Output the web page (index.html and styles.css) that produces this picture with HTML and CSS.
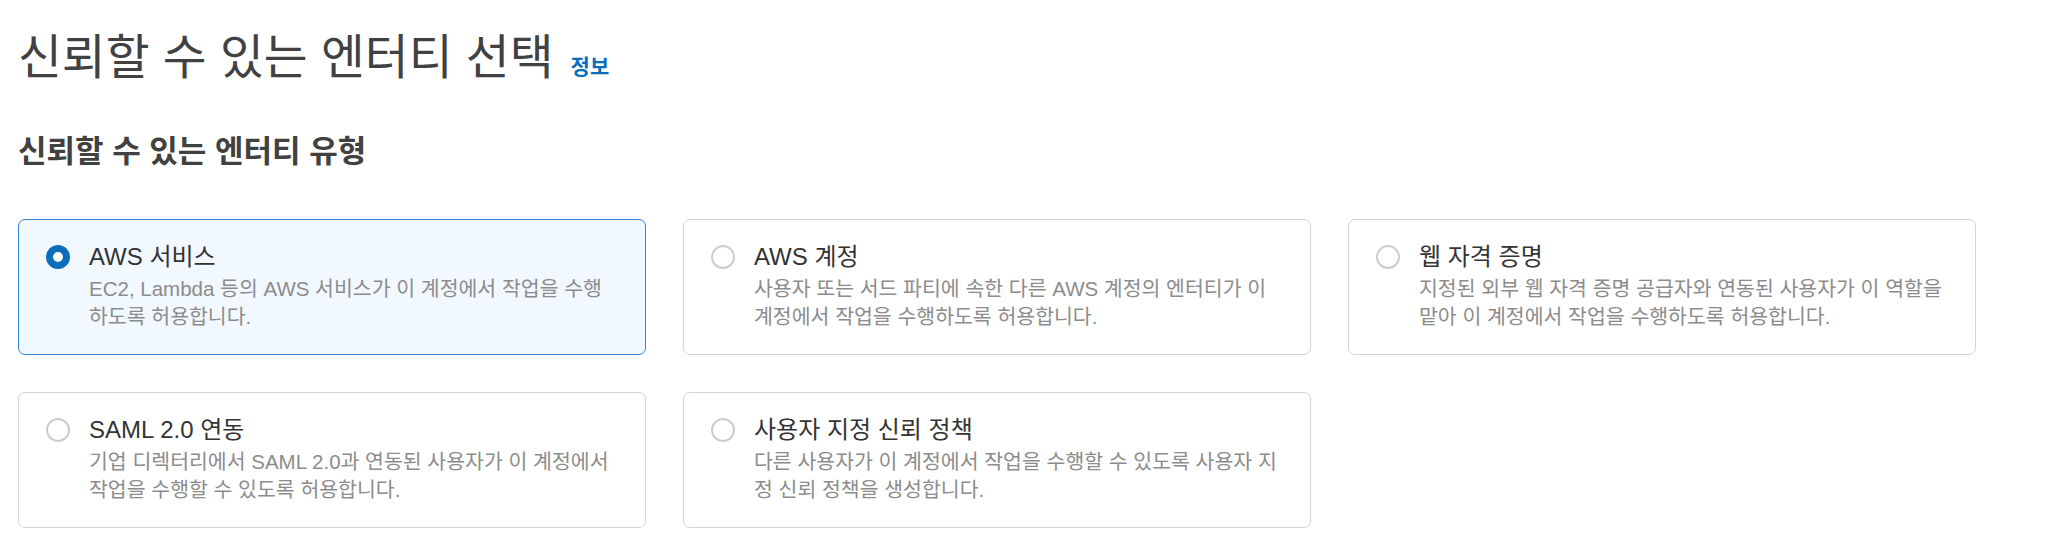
FILE: index.html
```html
<!DOCTYPE html>
<html lang="ko">
<head>
<meta charset="utf-8">
<link rel="stylesheet" href="styles.css">
</head>
<body>
<div class="page">
  <div class="header">
    <h1 class="title">신뢰할 수 있는 엔터티 선택</h1>
    <a class="info" href="#">정보</a>
  </div>
  <h2 class="subtitle">신뢰할 수 있는 엔터티 유형</h2>
  <div class="tiles">
    <div class="tile selected">
      <span class="radio checked"></span>
      <div class="tile-text">
        <div class="tile-title">AWS 서비스</div>
        <div class="tile-desc">EC2, Lambda 등의 AWS 서비스가 이 계정에서 작업을 수행하도록 허용합니다.</div>
      </div>
    </div>
    <div class="tile">
      <span class="radio"></span>
      <div class="tile-text">
        <div class="tile-title">AWS 계정</div>
        <div class="tile-desc">사용자 또는 서드 파티에 속한 다른 AWS 계정의 엔터티가 이 계정에서 작업을 수행하도록 허용합니다.</div>
      </div>
    </div>
    <div class="tile">
      <span class="radio"></span>
      <div class="tile-text">
        <div class="tile-title">웹 자격 증명</div>
        <div class="tile-desc">지정된 외부 웹 자격 증명 공급자와 연동된 사용자가 이 역할을 맡아 이 계정에서 작업을 수행하도록 허용합니다.</div>
      </div>
    </div>
    <div class="tile">
      <span class="radio"></span>
      <div class="tile-text">
        <div class="tile-title">SAML 2.0 연동</div>
        <div class="tile-desc">기업 디렉터리에서 SAML 2.0과 연동된 사용자가 이 계정에서 작업을 수행할 수 있도록 허용합니다.</div>
      </div>
    </div>
    <div class="tile">
      <span class="radio"></span>
      <div class="tile-text">
        <div class="tile-title">사용자 지정 신뢰 정책</div>
        <div class="tile-desc">다른 사용자가 이 계정에서 작업을 수행할 수 있도록 사용자 지정 신뢰 정책을 생성합니다.</div>
      </div>
    </div>
  </div>
</div>
</body>
</html>
```

FILE: styles.css
```css
html, body {
  margin: 0;
  padding: 0;
  background: #ffffff;
}

body {
  font-family: "Liberation Sans", "Noto Sans CJK KR", sans-serif;
  color: #333333;
}

.page {
  padding: 30px 18px 0 18px;
}

.header {
  display: flex;
  align-items: baseline;
  gap: 17px;
}

.title {
  margin: 0;
  font-size: 47.7px;
  line-height: 56px;
  font-weight: 400;
  color: #414141;
}

.info {
  font-size: 21px;
  font-weight: 700;
  color: #0a6ebd;
  text-decoration: none;
}

.subtitle {
  margin: 48px 0 0 0;
  font-size: 31px;
  line-height: 36px;
  font-weight: 700;
  color: #414141;
}

.tiles {
  margin-top: 49px;
  display: grid;
  grid-template-columns: repeat(3, 628px);
  gap: 37px;
}

.tile {
  box-sizing: border-box;
  height: 136px;
  border: 1px solid #d3d3d3;
  border-radius: 7px;
  background: #ffffff;
  padding: 22px 25.5px 23px 27px;
  display: flex;
  align-items: flex-start;
}

.tile.selected {
  border-color: #2f86d9;
  background: #f1f8ff;
}

.radio {
  box-sizing: border-box;
  flex: 0 0 24px;
  width: 24px;
  height: 24px;
  margin-top: 3px;
  margin-right: 19px;
  border-radius: 50%;
  border: 2px solid #cccccc;
  background: #ffffff;
}

.radio.checked {
  border: 7px solid #0a6ebd;
}

.tile-text {
  flex: 1;
  min-width: 0;
}

.tile-title {
  font-size: 24px;
  line-height: 30px;
  color: #333333;
}

.tile-desc {
  margin-top: 3px;
  font-size: 20.5px;
  line-height: 28px;
  color: #8c8c8c;
}
```
